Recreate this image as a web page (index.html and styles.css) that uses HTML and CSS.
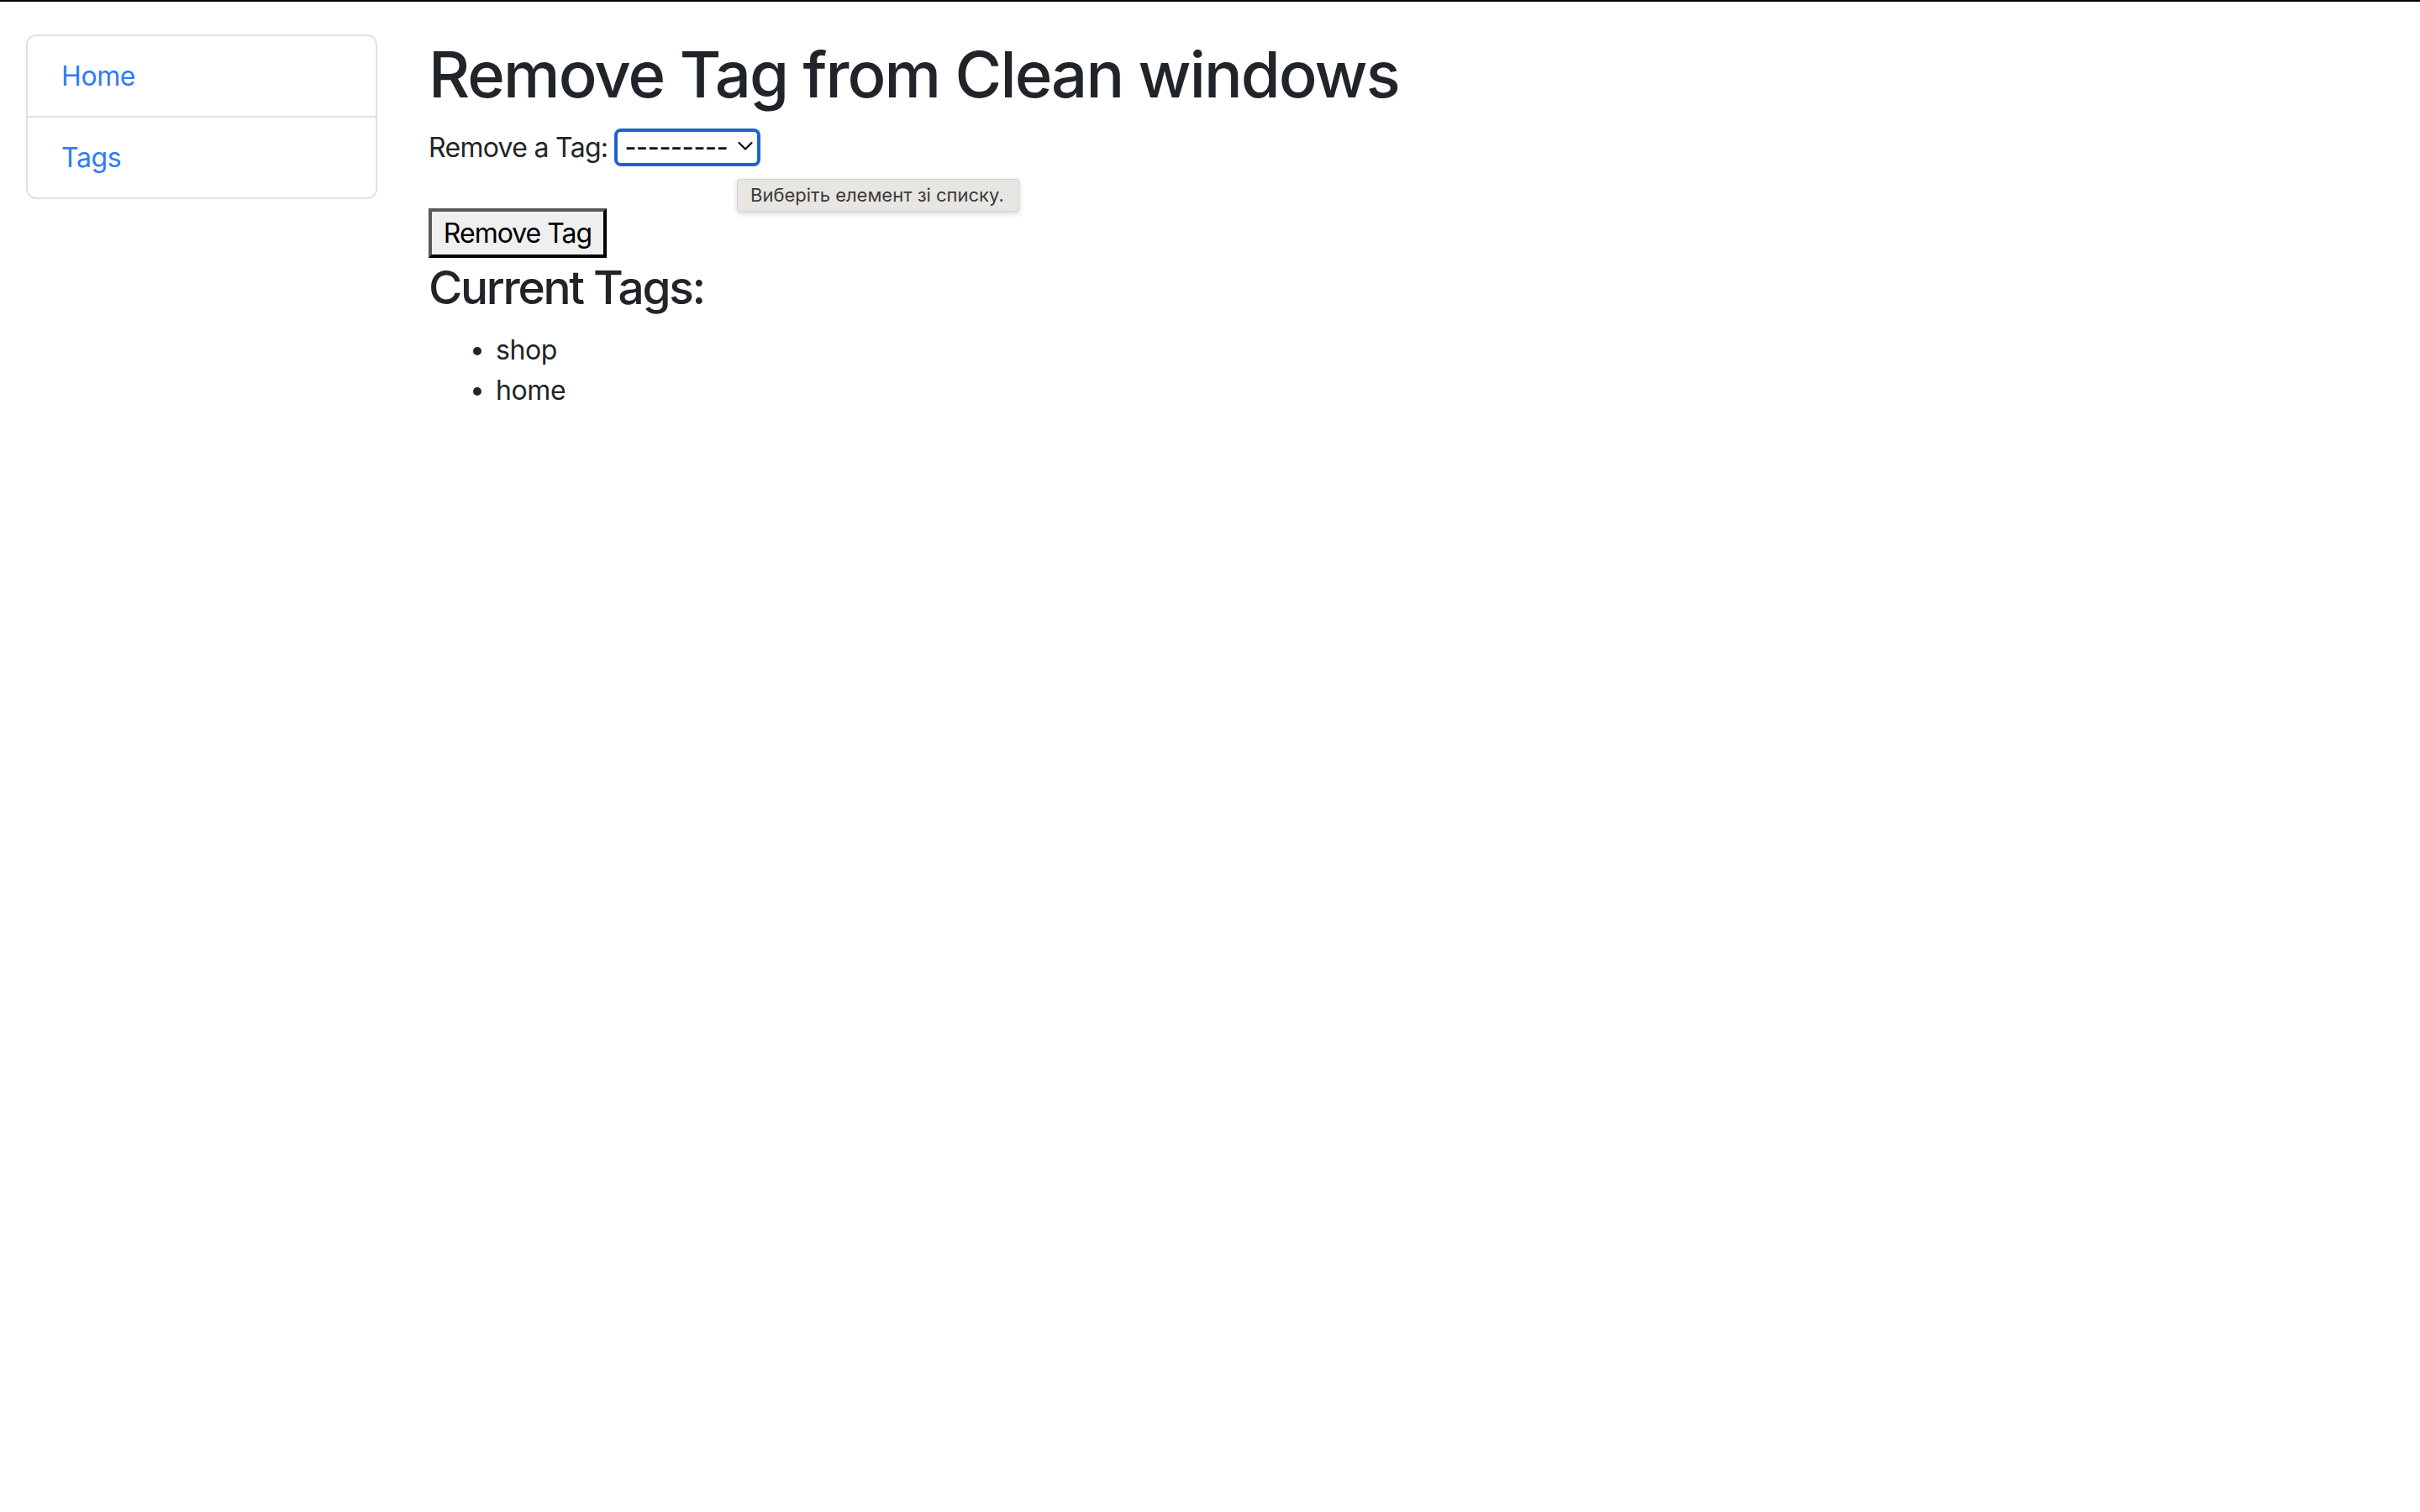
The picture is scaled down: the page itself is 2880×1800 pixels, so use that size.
FILE: index.html
```html
<!DOCTYPE html>
<html lang="uk">
<head>
<meta charset="utf-8">
<title>Remove Tag from Clean windows</title>
<link rel="stylesheet" href="styles.css">
</head>
<body>
<div class="page">
  <nav class="sidebar">
    <a class="item" href="#">Home</a>
    <a class="item" href="#">Tags</a>
  </nav>
  <main class="main">
    <h1 class="title">Remove Tag from Clean windows</h1>
    <form class="form">
      <div class="field">
        <label class="label" for="tag">Remove a Tag:</label>
        <span class="select-wrap">
          <select id="tag" class="select">
            <option>---------</option>
            <option>shop</option>
            <option>home</option>
          </select>
          <svg class="chevron" width="18" height="12" viewBox="0 0 18 12"><polyline points="1.5,2 9,9.5 16.5,2" fill="none" stroke="#111" stroke-width="2.2" stroke-linecap="round" stroke-linejoin="round"/></svg>
        </span>
        <div class="tooltip">Виберіть елемент зі списку.</div>
      </div>
      <button type="button" class="btn">Remove Tag</button>
    </form>
    <h3 class="subtitle">Current Tags:</h3>
    <ul class="tags">
      <li>shop</li>
      <li>home</li>
    </ul>
  </main>
</div>
</body>
</html>
```
FILE: styles.css
```css
html, body {
  margin: 0;
  padding: 0;
  background: #fff;
}
body {
  border-top: 2px solid #000;
  font-family: Inter, "Noto Sans", sans-serif;
  font-size: 32px;
  line-height: 48px;
  color: #212529;
}
.page {
  display: flex;
  align-items: flex-start;
  padding-left: 31px;
}
.sidebar {
  margin-top: 39px;
  width: 418px;
  box-sizing: border-box;
  border: 2px solid #dee2e6;
  border-radius: 12px;
  display: flex;
  flex-direction: column;
}
.item {
  display: block;
  padding: 23.5px 40px;
  line-height: 48px;
  color: #2f7cf6;
  text-decoration: none;
  letter-spacing: -0.4px;
}
.item + .item {
  border-top: 2px solid #dee2e6;
}
.main {
  margin-left: 61px;
  margin-top: 38px;
}
.title {
  margin: 0 0 16px 0;
  font-size: 76px;
  line-height: 96px;
  font-weight: 500;
  letter-spacing: -1.9px;
}
.form {
  margin: 0;
}
.field {
  position: relative;
  display: flex;
  align-items: center;
  height: 48px;
  gap: 8px;
}
.label {
  letter-spacing: -0.7px;
}
.select-wrap {
  position: relative;
  display: inline-block;
  margin-top: -2px;
}
.select {
  -webkit-appearance: none;
  appearance: none;
  box-sizing: border-box;
  width: 174px;
  height: 45px;
  border: 4px solid #1f63cc;
  border-radius: 8px;
  background: #fff;
  padding: 0 0 0 8px;
  font-family: Inter, sans-serif;
  font-size: 30px;
  font-weight: 500;
  line-height: 36px;
  letter-spacing: -0.2px;
  color: #111;
  outline: none;
}
.chevron {
  position: absolute;
  right: 9px;
  top: 17px;
}
.tooltip {
  position: absolute;
  left: 367px;
  top: 61px;
  width: 336px;
  height: 39px;
  box-sizing: border-box;
  padding-left: 15px;
  background: #e8e6e2;
  border: 1px solid #d6d4d0;
  border-radius: 3px;
  box-shadow: 0 2px 6px rgba(0,0,0,0.18);
  font-family: Inter, "Noto Sans", sans-serif;
  font-size: 22px;
  line-height: 37px;
  color: #3a3a3a;
  white-space: nowrap;
}
.btn {
  display: block;
  margin-top: 48px;
  box-sizing: border-box;
  width: 212px;
  height: 59px;
  padding: 0;
  text-align: center;
  white-space: nowrap;
  background: #efefef;
  border-style: solid;
  border-width: 4px;
  border-color: #595959 #000 #000 #595959;
  font-family: Inter, sans-serif;
  font-size: 32px;
  line-height: 40px;
  color: #000;
  letter-spacing: -1px;
}
.subtitle {
  margin: 2px 0 17px 0;
  font-size: 55px;
  line-height: 67px;
  font-weight: 500;
  letter-spacing: -2.3px;
}
.tags {
  margin: 0;
  padding-left: 80px;
}
.tags li {
  line-height: 48px;
  letter-spacing: -0.4px;
}
```
